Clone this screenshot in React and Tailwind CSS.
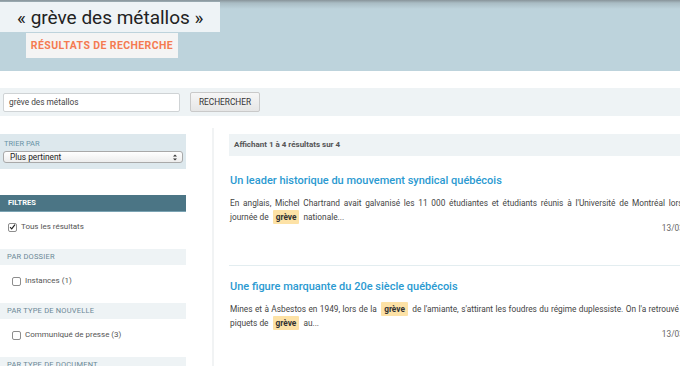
import React from 'react';

const Check = ({ checked }) => (
  <span className="flex h-[9px] w-[9px] items-center justify-center rounded-[2px] border border-[#8d8d8d] bg-white">
    {checked && (
      <svg width="8" height="8" viewBox="0 0 8 8">
        <path d="M1.2 4.2 L3.1 6.2 L6.8 1.2" fill="none" stroke="#222" strokeWidth="1.3" />
      </svg>
    )}
  </span>
);

const Hl = ({ children }) => (
  <span className="mx-[2px] rounded-[1px] bg-[#fde2a6] px-[3px] py-[2px] font-bold text-[#333]">{children}</span>
);

const SectionBand = ({ label }) => (
  <div className="flex h-[16px] items-center bg-[#eef3f5] pl-[7px] text-[7.5px] uppercase tracking-[0.2px] text-[#6b8896]">
    {label}
  </div>
);

const Option = ({ label, checked, indent }) => (
  <div className={`flex items-center gap-[4px] text-[8px] text-[#555] ${indent ? 'pl-[12px]' : 'pl-[8px]'}`}>
    <Check checked={checked} />
    <span>{label}</span>
  </div>
);

const Result = ({ title, line1, line2, date }) => (
  <div>
    <h3 className="text-[11px] font-medium leading-[14px] text-[#2b9ad1]">{title}</h3>
    <div className="mt-[8px] text-[8.3px] leading-[14px] text-[#444]">
      <p className="text-justify [text-align-last:justify]">{line1}</p>
      <p>{line2}</p>
    </div>
    <div className="-mt-[1px] text-right text-[8.3px] leading-[10px] text-[#666]">{date}</div>
  </div>
);

export default function App() {
  return (
    <div className="relative h-[366px] w-[680px] overflow-hidden bg-white font-['Roboto',sans-serif]">
      <header className="h-[71px] bg-[linear-gradient(to_bottom,#88949a_0px,#a9bcc4_3px,#bdd3dc_9px,#bdd3dc_100%)] pt-[2px]">
        <div className="flex h-[30px] w-[220px] items-center bg-[#eef3f6] pl-[17px] text-[19px] leading-none text-[#222]">
          « grève des métallos »
        </div>
        <div className="ml-[26px] mt-[1px] flex h-[25px] w-[152px] items-center justify-center bg-[#f4f4f4] text-[10.5px] font-bold tracking-[0.4px] text-[#f47b52]">
          RÉSULTATS DE RECHERCHE
        </div>
      </header>

      <div className="mt-[17px] flex h-[28px] items-center bg-[#eef3f5] pl-[3px]">
        <div className="flex h-[19px] w-[177px] items-center rounded-[2px] border border-[#cfd3d5] bg-white pl-[5px] text-[8.3px] text-[#444]">
          grève des métallos
        </div>
        <button className="ml-[10px] flex h-[20px] w-[70px] items-center justify-center rounded-[2px] border border-[#c9c9c9] bg-[linear-gradient(to_bottom,#f6f6f6,#e6e6e6)] text-[8.3px] text-[#333]">
          RECHERCHER
        </button>
      </div>

      <div className="flex">
        <aside className="w-[186px] shrink-0 pt-[18px]">
          <div className="h-[35px] bg-[#dde8ed] px-[3px] pt-[6px]">
            <div className="pl-[1px] text-[7.5px] leading-[8px] text-[#6a93a6]">TRIER PAR</div>
            <div className="mt-[3px] flex h-[12px] items-center justify-between rounded-[3px] border border-[#a9a9a9] bg-[linear-gradient(to_bottom,#ffffff,#ededed)] pl-[6px] pr-[5px] text-[8.3px] text-[#222]">
              <span>Plus pertinent</span>
              <svg width="4" height="7" viewBox="0 0 4 7">
                <path d="M0 2.6 L2 0.4 L4 2.6 Z M0 4.4 L2 6.6 L4 4.4 Z" fill="#333" />
              </svg>
            </div>
          </div>

          <div className="mt-[26px] flex h-[17px] items-center border-b border-[#7aa3b3] bg-[#4b7585] pl-[8px] text-[7.5px] font-bold text-white">
            FILTRES
          </div>
          <div className="h-[37px] pt-[9px]">
            <Option label="Tous les résultats" checked />
          </div>
          <SectionBand label="PAR DOSSIER" />
          <div className="h-[38px] pt-[10px]">
            <Option label="Instances (1)" indent />
          </div>
          <SectionBand label="PAR TYPE DE NOUVELLE" />
          <div className="h-[38px] pt-[10px]">
            <Option label="Communiqué de presse (3)" indent />
          </div>
          <SectionBand label="PAR TYPE DE DOCUMENT" />
        </aside>

        <div className="ml-[26px] mt-[12px] w-[2px] shrink-0 self-stretch bg-[#f1f3f4]" />

        <main className="ml-[15px] w-[477px] shrink-0 pt-[18px]">
          <div className="flex h-[22px] items-center bg-[#eef3f5] pl-[5px] text-[8px] font-bold text-[#555]">
            Affichant 1 à 4 résultats sur 4
          </div>
          <div className="mt-[18px] pl-[1px]">
            <Result
              title="Un leader historique du mouvement syndical québécois"
              line1="En anglais, Michel Chartrand avait galvanisé les 11 000 étudiantes et étudiants réunis à l'Université de Montréal lors d'une"
              line2={<>journée de <Hl>grève</Hl> nationale...</>}
              date="13/03/2001"
            />
          </div>
          <div className="mt-[32px] h-[1px] bg-[#e3edf0]" />
          <div className="mt-[14px] pl-[1px]">
            <Result
              title="Une figure marquante du 20e siècle québécois"
              line1={<>Mines et à Asbestos en 1949, lors de la <Hl>grève</Hl> de l'amiante, s'attirant les foudres du régime duplessiste. On l'a retrouvé sur les</>}
              line2={<>piquets de <Hl>grève</Hl> au...</>}
              date="13/03/2001"
            />
          </div>
        </main>
      </div>
    </div>
  );
}
